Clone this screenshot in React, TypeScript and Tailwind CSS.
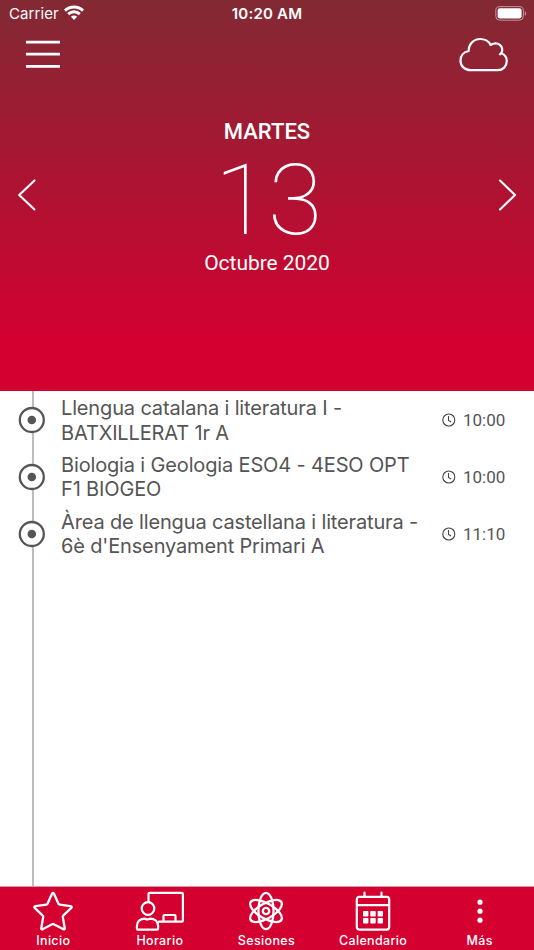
import type { ReactNode } from "react";

const sessions = [
  { lines: ["Llengua catalana i literatura I -", "BATXILLERAT 1r A"], time: "10:00" },
  { lines: ["Biologia i Geologia ESO4 - 4ESO OPT", "F1 BIOGEO"], time: "10:00" },
  { lines: ["Àrea de llengua castellana i literatura -", "6è d'Ensenyament Primari A"], time: "11:10" },
];

function StatusBar() {
  return (
    <div className="grid h-7 grid-cols-3 items-center font-['Inter',sans-serif] text-white">
      <div className="flex items-center gap-[6px] pl-[9px]">
        <span className="text-[15px] leading-7 tracking-[0.1px]">Carrier</span>
        <svg width="20" height="16" viewBox="0 0 20 16" fill="none" stroke="white" strokeWidth="2.9" className="-mt-[2px] -ml-px">
          <path d="M1 5.6C6 .8 14 .8 19 5.6" />
          <path d="M4.2 9.1c3.3-3.1 8.3-3.1 11.6 0" />
          <path d="M6.9 11.7c1.7-1.6 4.5-1.6 6.2 0L10 15Z" fill="white" stroke="none" />
        </svg>
      </div>
      <div className="text-center text-[15px] font-semibold leading-7 tracking-[0.2px]">10:20 AM</div>
      <div className="flex justify-end pr-[7px]">
        <svg width="32" height="15" viewBox="0 0 32 15" fill="none" className="-mt-px">
          <rect x=".8" y=".6" width="27.6" height="13.6" rx="4" stroke="white" strokeOpacity=".5" />
          <rect x="2.6" y="2.2" width="24" height="10.4" rx="2.4" fill="white" />
          <path d="M29.8 5.2c1.8.6 1.8 3.9 0 4.5Z" fill="white" fillOpacity=".5" />
        </svg>
      </div>
    </div>
  );
}

function Chevron({ right = false }: { right?: boolean }) {
  return (
    <svg width="20" height="34" viewBox="0 0 20 34" fill="none" stroke="white" strokeWidth="2.1" strokeLinecap="round" strokeLinejoin="round">
      <path d={right ? "M3 2.5 18 17 3 31.5" : "M17.5 2.5 2.2 17 17.5 31.5"} />
    </svg>
  );
}

function Header() {
  return (
    <header className="flex h-[391px] shrink-0 flex-col bg-[linear-gradient(to_bottom,#822a34_0%,#d30030_88%)] text-white">
      <StatusBar />
      <div className="flex h-[52px] items-center justify-between pl-[26px] pr-[25px]">
        <svg width="34" height="30" viewBox="0 0 34 30" stroke="white" strokeWidth="2.8">
          <path d="M0 3.1h34M0 15.1h34M0 27.3h34" />
        </svg>
        <svg width="50" height="35" viewBox="0 0 50 35" fill="none" stroke="white" strokeWidth="2.2" strokeLinejoin="round">
          <path d="M11.5 33.2h27.2c5.2 0 9.1-3.9 9.1-9.1 0-3.5-2.3-6.7-5.4-7.9 3-6.6-3.7-12.6-10.5-8.4C29.5 4.2 25.6 2 21.2 2 14.5 2 9.5 7.2 9.7 14 5 15 1.5 18.6 1.5 23.4c0 5.6 4.2 9.8 10 9.8Z" />
          <path d="m31 7 .8 1.4M40.3 17.8l2.1-1.8" />
        </svg>
      </div>
      <div className="flex h-[230px] items-center justify-between px-[17px]">
        <Chevron />
        <div className="flex flex-col items-center pt-[3px] font-['Roboto',sans-serif]">
          <div className="pb-[2px] pt-[2px] text-[22px] font-medium leading-[26px]">MARTES</div>
          <div className="pl-[2px] text-[99px] font-thin leading-[107px] tracking-[-1px]">13</div>
          <div className="pb-[3px] text-[21px] leading-[19px] tracking-[-0.05px]">Octubre 2020</div>
        </div>
        <Chevron right />
      </div>
    </header>
  );
}

function Timeline() {
  return (
    <main className="relative flex-1 bg-white pt-[1px] text-[#555]">
      <div className="absolute inset-y-0 left-[32px] w-[2px] bg-[#bdbdbd]" />
      {sessions.map((s) => (
        <div key={s.lines[0]} className="relative flex h-[56.8px] items-center pl-[18px] pr-[28px]">
          <svg width="28" height="28" viewBox="0 0 28 28" className="shrink-0">
            <circle cx="13.8" cy="14" r="12" fill="white" stroke="#555" strokeWidth="2.3" />
            <circle cx="13.8" cy="14" r="4.3" fill="#555" />
          </svg>
          <div className="ml-[15px] flex-1 whitespace-nowrap pt-[0.6px] font-['Inter',sans-serif] text-[20px] leading-[24.5px] tracking-[-0.15px]">
            <div>{s.lines[0]}</div>
            <div>{s.lines[1]}</div>
          </div>
          <svg width="14" height="14" viewBox="0 0 14 14" fill="none" stroke="#444" strokeWidth="1.1">
            <circle cx="6.8" cy="7" r="6" />
            <path d="M6.5 3v4.4l2.6 1.5" />
          </svg>
          <span className="ml-[7px] w-[43px] pt-px font-['Roboto',sans-serif] text-[17px]">{s.time}</span>
        </div>
      ))}
    </main>
  );
}

function Tab({ label, children }: { label: string; children: ReactNode }) {
  return (
    <div className="flex flex-col items-center pt-[4px]">
      <svg width="50" height="42" viewBox="0 0 50 42" fill="none" stroke="white" strokeWidth="2.2" strokeLinecap="round" strokeLinejoin="round">
        {children}
      </svg>
      <span className="text-[12.5px] font-medium leading-[15px] tracking-[0.35px]">{label}</span>
    </div>
  );
}

function TabBar() {
  return (
    <nav className="grid h-16 shrink-0 grid-cols-5 border-t border-[#d997a6] bg-[#d30030] pr-px font-['Inter',sans-serif] text-white">
      <Tab label="Inicio">
        <path d="M24.1 2.6q.9-1.6 1.8 0l4.7 10.3q.3.7 1 .8l10.8 1.5q2.2.4.7 2l-7.9 7.5q-.5.5-.4 1.2l1.9 11.1q.2 2-1.7 1.1L25.8 33.2q-.8-.4-1.6 0l-9.2 4.9q-1.9.9-1.7-1.1L15.2 25.9q.1-.7-.4-1.2l-7.9-7.5q-1.5-1.6.7-2l10.8-1.5q.7-.1 1-.8Z" strokeWidth="2.3" />
      </Tab>
      <Tab label="Horario">
        <path d="M13.5 10.5V3q0-1.2 1.2-1.2h32q1.2 0 1.2 1.2v26.5q0 1.2-1.2 1.2H24" />
        <path d="M28.5 30v-5q0-1 1-1h10q1 0 1 1v5" />
        <circle cx="13" cy="17.5" r="6.3" />
        <path d="M10.2 27.7c-5.3 0-8.3 2.8-8.3 7.5v2q0 1.4 1.4 1.4h18.3q1.5 0 1.5-1.4v-2c0-4.7-3.2-7.5-8.2-7.5-1.8 1-3 1-4.7 0Z" />
      </Tab>
      <Tab label="Sesiones">
        <g strokeWidth="2.3">
          <ellipse cx="25" cy="20" rx="7.6" ry="18.2" />
          <ellipse cx="25" cy="20" rx="7.6" ry="17.8" transform="rotate(60 25 20)" />
          <ellipse cx="25" cy="20" rx="7.6" ry="17.8" transform="rotate(-60 25 20)" />
          <circle cx="25" cy="20" r="3.2" />
        </g>
      </Tab>
      <Tab label="Calendario">
        <rect x="8.8" y="5.8" width="32.4" height="32.8" rx="2.5" />
        <path d="M9 14.2h32M16.5 1.5v4M33.5 1.5v4" />
        <g fill="white" stroke="none">
          {[20, 27].map((y) =>
            [15, 22.3, 29.6].map((x) => <rect key={`${x}-${y}`} x={x} y={y} width="5.4" height="5.4" rx=".7" />),
          )}
        </g>
      </Tab>
      <Tab label="Más">
        <g fill="white" stroke="none">
          <circle cx="25" cy="11.2" r="2.6" />
          <circle cx="25" cy="20.2" r="2.6" />
          <circle cx="25" cy="29.2" r="2.6" />
        </g>
      </Tab>
    </nav>
  );
}

export default function App() {
  return (
    <div className="flex h-[950px] w-[534px] flex-col overflow-hidden">
      <Header />
      <Timeline />
      <TabBar />
    </div>
  );
}
